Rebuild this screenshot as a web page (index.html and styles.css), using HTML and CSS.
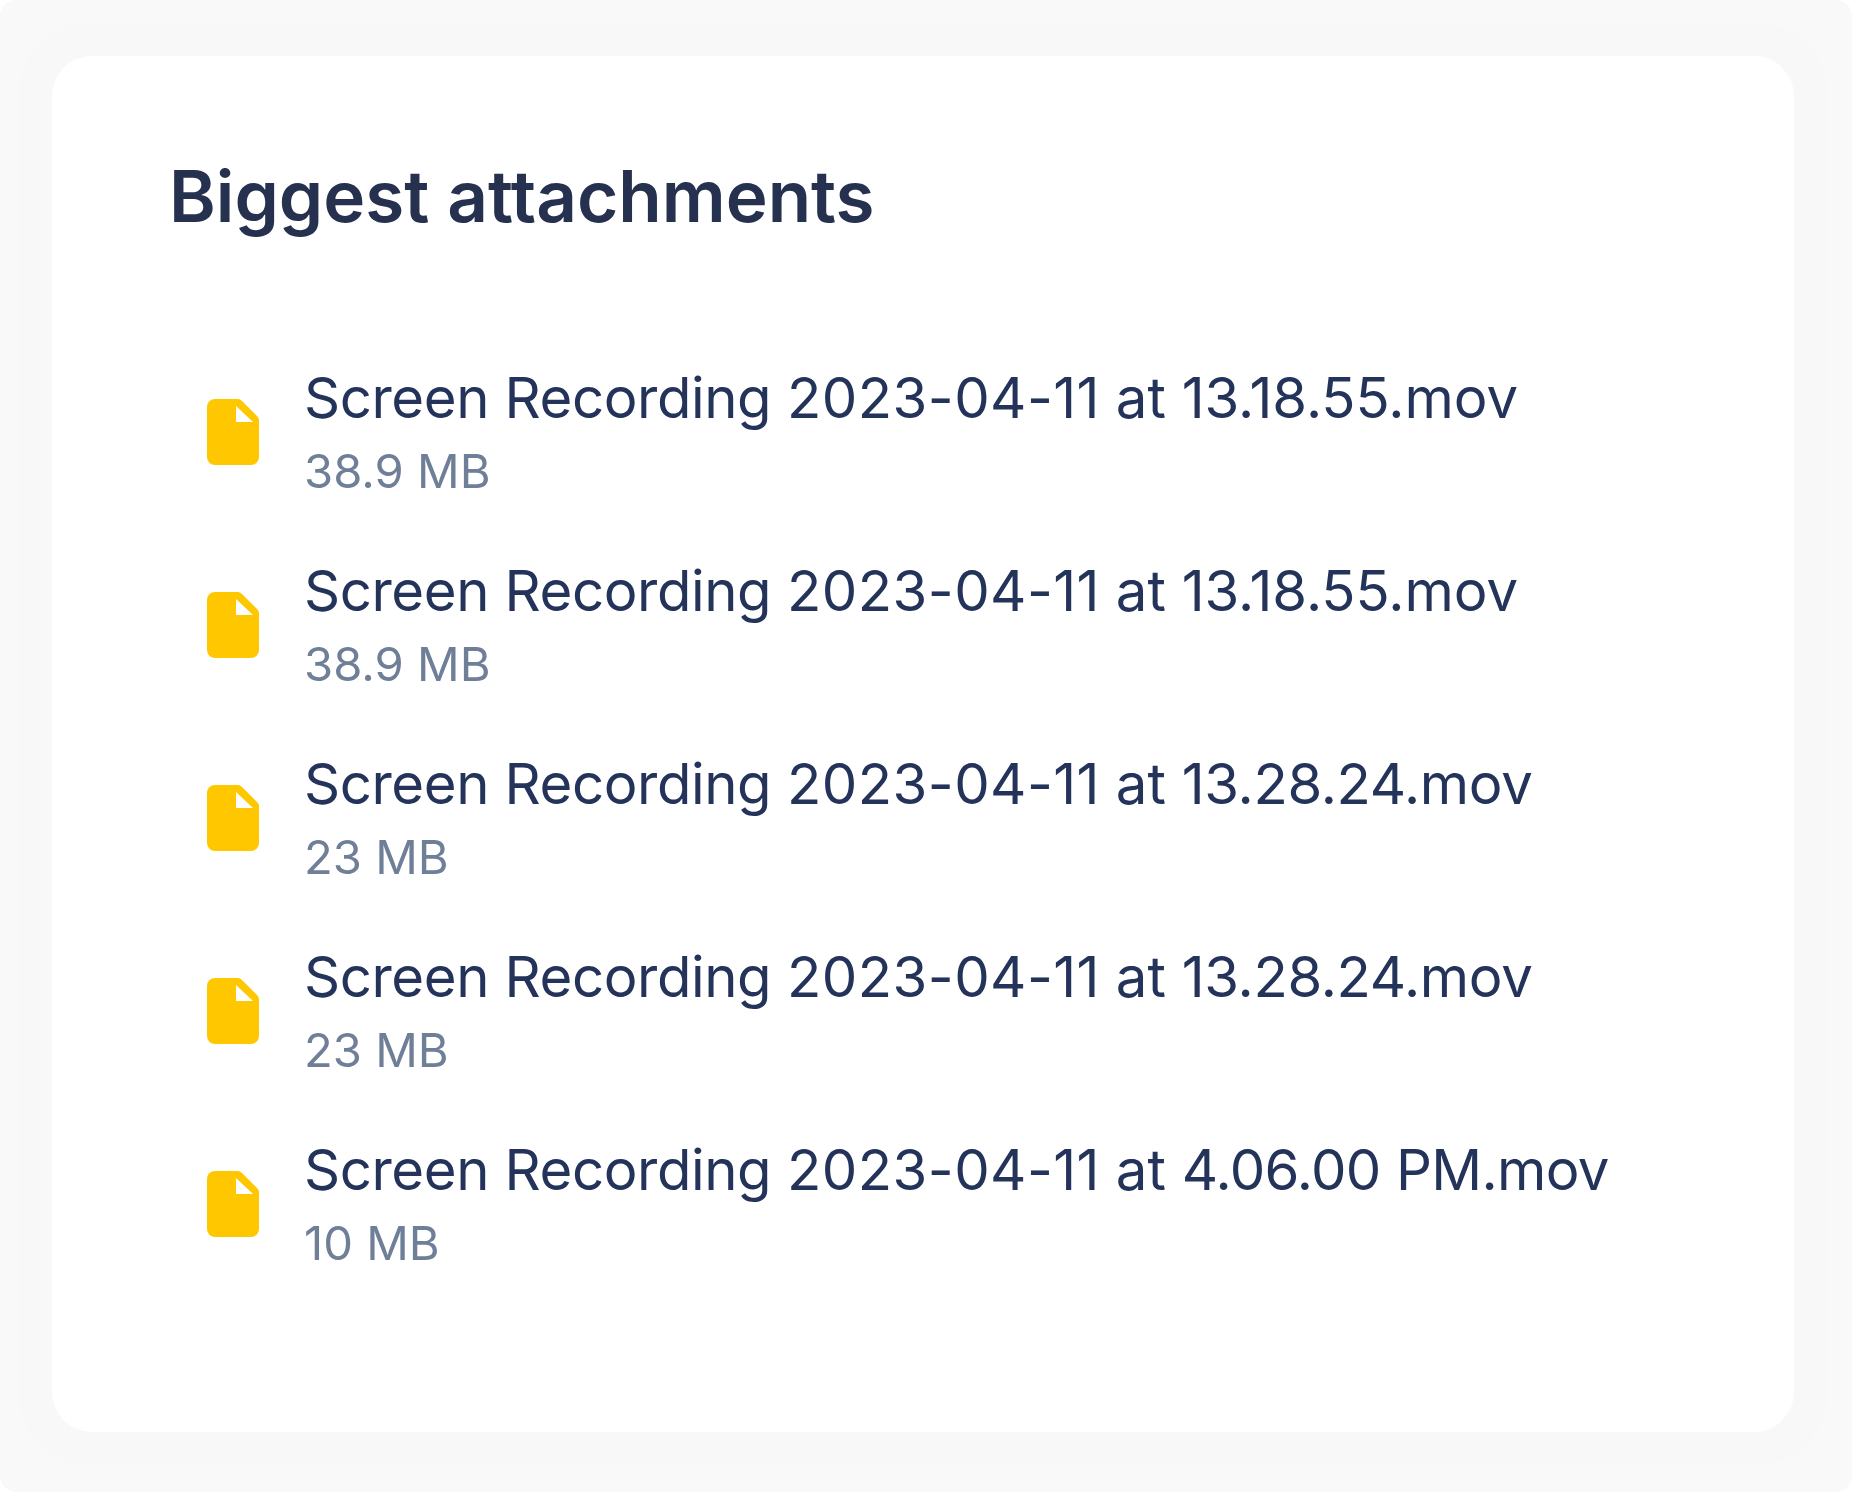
FILE: index.html
```html
<!DOCTYPE html>
<html lang="en">
<head>
<meta charset="utf-8">
<title>Biggest attachments</title>
<link rel="stylesheet" href="styles.css">
</head>
<body>
<main class="panel">
  <section class="card">
    <h2 class="title">Biggest attachments</h2>
    <ul class="list">
      <li class="row">
        <svg class="icon" viewBox="0 0 52 66"><path class="icon-body" d="M8 0H31Q33 0 35 2L50 17Q52 19 52 21V58a8 8 0 0 1-8 8H8a8 8 0 0 1-8-8V8a8 8 0 0 1 8-8Z"/><path class="icon-fold" d="M29 7L46 23H29Z"/></svg>
        <div class="info"><div class="name"><span class="label">Screen Recording</span> <span class="date">2023-04-11</span> at <span class="clock-a">13.18.55.mov</span></div><div class="size">38.9 MB</div></div>
      </li>
      <li class="row">
        <svg class="icon" viewBox="0 0 52 66"><path class="icon-body" d="M8 0H31Q33 0 35 2L50 17Q52 19 52 21V58a8 8 0 0 1-8 8H8a8 8 0 0 1-8-8V8a8 8 0 0 1 8-8Z"/><path class="icon-fold" d="M29 7L46 23H29Z"/></svg>
        <div class="info"><div class="name"><span class="label">Screen Recording</span> <span class="date">2023-04-11</span> at <span class="clock-a">13.18.55.mov</span></div><div class="size">38.9 MB</div></div>
      </li>
      <li class="row">
        <svg class="icon" viewBox="0 0 52 66"><path class="icon-body" d="M8 0H31Q33 0 35 2L50 17Q52 19 52 21V58a8 8 0 0 1-8 8H8a8 8 0 0 1-8-8V8a8 8 0 0 1 8-8Z"/><path class="icon-fold" d="M29 7L46 23H29Z"/></svg>
        <div class="info"><div class="name"><span class="label">Screen Recording</span> <span class="date">2023-04-11</span> at <span class="clock-b">13.28.24.mov</span></div><div class="size">23 MB</div></div>
      </li>
      <li class="row">
        <svg class="icon" viewBox="0 0 52 66"><path class="icon-body" d="M8 0H31Q33 0 35 2L50 17Q52 19 52 21V58a8 8 0 0 1-8 8H8a8 8 0 0 1-8-8V8a8 8 0 0 1 8-8Z"/><path class="icon-fold" d="M29 7L46 23H29Z"/></svg>
        <div class="info"><div class="name"><span class="label">Screen Recording</span> <span class="date">2023-04-11</span> at <span class="clock-b">13.28.24.mov</span></div><div class="size">23 MB</div></div>
      </li>
      <li class="row">
        <svg class="icon" viewBox="0 0 52 66"><path class="icon-body" d="M8 0H31Q33 0 35 2L50 17Q52 19 52 21V58a8 8 0 0 1-8 8H8a8 8 0 0 1-8-8V8a8 8 0 0 1 8-8Z"/><path class="icon-fold" d="M29 7L46 23H29Z"/></svg>
        <div class="info"><div class="name"><span class="label">Screen Recording</span> <span class="date">2023-04-11</span> at <span class="clock-c">4.06.00 PM.mov</span></div><div class="size">10 MB</div></div>
      </li>
    </ul>
  </section>
</main>
</body>
</html>
```
FILE: styles.css
```css
* { box-sizing: border-box; }
html, body { margin: 0; background: #fff; }
body { font-family: Inter, "Liberation Sans", sans-serif; }
.panel {
  width: 1852px;
  height: 1492px;
  padding: 56px 58px 60px 52px;
  background: #f9f9f9;
  border-radius: 16px;
}
.card {
  height: 1376px;
  padding: 96px 119px 0 117px;
  background: #fff;
  border-radius: 40px;
  box-shadow: 0 0 0 34px #f8f8f8;
}
.title {
  margin: 0 0 103px;
  font-size: 71px;
  line-height: 89px;
  font-weight: 600;
  color: #26314f;
  filter: blur(0.6px);
}
.list {
  margin: 0;
  padding: 0 0 0 38px;
  list-style: none;
  display: flex;
  flex-direction: column;
  gap: 17px;
}
.row {
  display: flex;
  align-items: center;
  gap: 45px;
  height: 176px;
}
.icon { width: 52px; height: 66px; flex: none; filter: blur(0.5px); }
.icon-body { fill: #ffc700; }
.icon-fold { fill: #fff; }
.info { display: flex; flex-direction: column; gap: 10px; filter: blur(0.6px); }
.name { font-size: 56.3px; line-height: 68px; color: #24335a; }
.label { letter-spacing: -0.4px; }
.date { letter-spacing: 0.45px; }
.clock-b { letter-spacing: -0.3px; }
.clock-c { letter-spacing: -0.65px; }
.size { font-size: 47.2px; line-height: 58px; color: #6f7f98; }
```
